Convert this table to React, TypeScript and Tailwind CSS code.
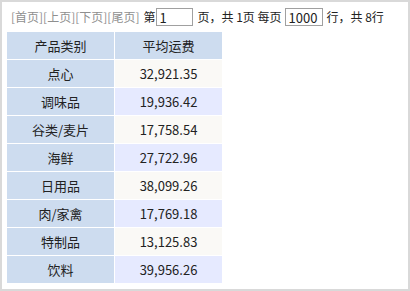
import React from "react";

const rows: [string, string][] = [
  ["点心", "32,921.35"],
  ["调味品", "19,936.42"],
  ["谷类/麦片", "17,758.54"],
  ["海鲜", "27,722.96"],
  ["日用品", "38,099.26"],
  ["肉/家禽", "17,769.18"],
  ["特制品", "13,125.83"],
  ["饮料", "39,956.26"],
];

const font = { fontFamily: '"Noto Sans CJK SC", "Noto Sans", sans-serif' };

export default function App() {
  return (
    <div
      className="w-[410px] h-[291px] box-border border-2 border-[#d9d9d9] bg-white p-[5px] text-[#222]"
      style={font}
    >
      <div className="flex items-center h-[20px] pl-[4px] text-[12px] leading-none whitespace-nowrap">
        <span className="text-[#8f8f8f]">[首页][上页][下页][尾页]</span>
        <span className="ml-[4px]">第</span>
        <div className="ml-[1px] w-[37px] h-[18px] box-border border border-[#a0a0a0] flex items-center pl-[2px] text-[13px]">
          1
        </div>
        <span className="ml-[4px]">页，共 1页 每页</span>
        <div className="ml-[3px] w-[38px] h-[18px] box-border border border-[#a0a0a0] flex items-center pl-[3px] text-[13px]">
          1000
        </div>
        <span className="ml-[4px]">行，共 8行</span>
      </div>
      <div className="mt-[5px] grid grid-cols-[107px_107px] gap-[1px] text-[13px] leading-none">
        <div className="h-[27px] bg-[#cddcef] flex items-center justify-center">产品类别</div>
        <div className="h-[27px] bg-[#cddcef] flex items-center justify-center">平均运费</div>
        {rows.map(([name, val], i) => (
          <React.Fragment key={name}>
            <div className="h-[27px] bg-[#cddcef] flex items-center justify-center">{name}</div>
            <div
              className={
                "h-[27px] flex items-center justify-center " +
                (i % 2 === 0 ? "bg-[#faf9f6]" : "bg-[#e6eaff]")
              }
            >
              {val}
            </div>
          </React.Fragment>
        ))}
      </div>
    </div>
  );
}
